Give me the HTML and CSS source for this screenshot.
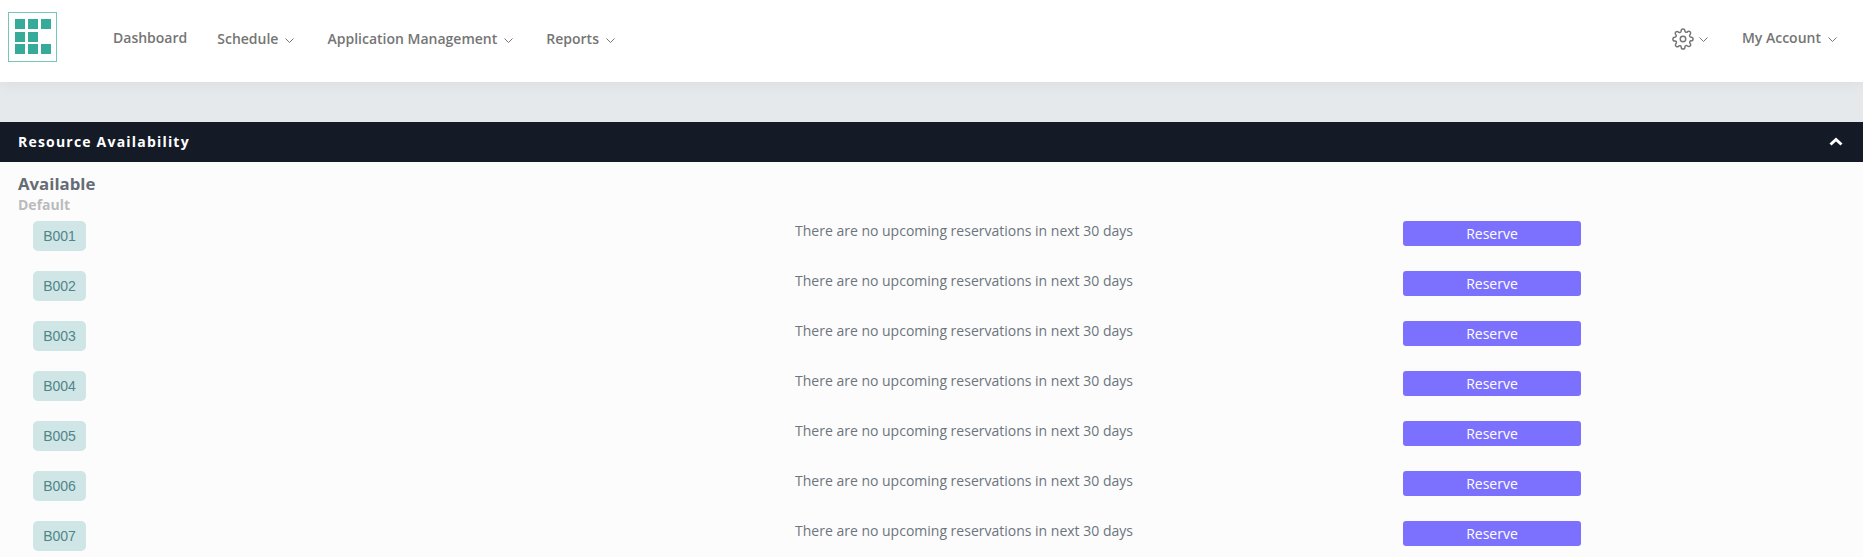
FILE: index.html
```html
<!DOCTYPE html>
<html lang="en">
<head>
    <meta charset="UTF-8">
    <meta name="viewport" content="width=device-width, initial-scale=1.0">
    <title>Resource Availability</title>
    <link rel="stylesheet" href="styles.css">
</head>
<body>

    <nav class="topbar">
        <div class="logo">
            <span></span><span></span><span></span>
            <span></span><span></span><span class="blank"></span>
            <span></span><span></span><span></span>
        </div>
        <ul class="menu">
            <li class="dashboard">Dashboard</li>
            <li>Schedule <svg class="caret" viewBox="0 0 9 5"><path d="M.5 .5l4 4 4-4"/></svg></li>
            <li>Application Management <svg class="caret" viewBox="0 0 9 5"><path d="M.5 .5l4 4 4-4"/></svg></li>
            <li>Reports <svg class="caret" viewBox="0 0 9 5"><path d="M.5 .5l4 4 4-4"/></svg></li>
        </ul>
        <div class="right-menu">
            <div class="settings">
                <svg class="gear" viewBox="0 0 24 24">
                    <circle cx="12" cy="12" r="3"/>
                    <path d="M19.4 15a1.65 1.65 0 0 0 .33 1.82l.06.06a2 2 0 1 1-2.83 2.83l-.06-.06a1.65 1.65 0 0 0-2.82 1.17V21a2 2 0 1 1-4 0v-.09a1.65 1.65 0 0 0-2.82-1.12l-.06.06a2 2 0 1 1-2.83-2.83l.06-.06a1.65 1.65 0 0 0-1.17-2.82H3a2 2 0 1 1 0-4h.09a1.65 1.65 0 0 0 1.12-2.82l-.06-.06a2 2 0 1 1 2.83-2.83l.06.06a1.65 1.65 0 0 0 1.82.33H9a1.65 1.65 0 0 0 1-1.51V3a2 2 0 1 1 4 0v.09a1.65 1.65 0 0 0 2.82 1.12l.06-.06a2 2 0 1 1 2.83 2.83l-.06.06a1.65 1.65 0 0 0-.33 1.82V9a1.65 1.65 0 0 0 1.51 1H21a2 2 0 1 1 0 4h-.09a1.65 1.65 0 0 0-1.51 1z"/>
                </svg>
                <svg class="caret" viewBox="0 0 9 5"><path d="M.5 .5l4 4 4-4"/></svg>
            </div>
            <div class="account">My Account <svg class="caret" viewBox="0 0 9 5"><path d="M.5 .5l4 4 4-4"/></svg></div>
        </div>
    </nav>

    <div class="strip"></div>

    <div class="panel-head">
        <span>Resource Availability</span>
        <svg class="collapse" viewBox="0 0 14 9"><path d="M1.5 7.5L7 2.5l5.5 5"/></svg>
    </div>

    <section class="panel-body">
        <h2>Available</h2>
        <h3>Default</h3>
        <div class="row"><span class="chip">B001</span><p>There are no upcoming reservations in next 30 days</p><button>Reserve</button></div>
        <div class="row"><span class="chip">B002</span><p>There are no upcoming reservations in next 30 days</p><button>Reserve</button></div>
        <div class="row"><span class="chip">B003</span><p>There are no upcoming reservations in next 30 days</p><button>Reserve</button></div>
        <div class="row"><span class="chip">B004</span><p>There are no upcoming reservations in next 30 days</p><button>Reserve</button></div>
        <div class="row"><span class="chip">B005</span><p>There are no upcoming reservations in next 30 days</p><button>Reserve</button></div>
        <div class="row"><span class="chip">B006</span><p>There are no upcoming reservations in next 30 days</p><button>Reserve</button></div>
        <div class="row"><span class="chip">B007</span><p>There are no upcoming reservations in next 30 days</p><button>Reserve</button></div>
    </section>

</body>
</html>
```

FILE: styles.css
```css
html, body {
    height: 557px;
    overflow: hidden;
}
body {
    margin: 0;
    font-family: "Open Sans", sans-serif;
    font-size: 14px;
    color: #6c757d;
    background-color: #fcfcfc;
}
.topbar {
    position: relative;
    height: 82px;
    display: flex;
    align-items: flex-start;
    padding: 0 26px 0 8px;
    background: #fff;
    box-shadow: 0 2px 14px rgba(0, 0, 0, 0.05);
}
.logo {
    width: 49px;
    height: 50px;
    margin-top: 12px;
    padding: 6px;
    box-sizing: border-box;
    border: 1px solid #74c7b8;
    display: grid;
    grid-template-columns: repeat(3, 10px);
    grid-template-rows: repeat(3, 10px);
    column-gap: 3px;
    row-gap: 2.5px;
}
.logo span {
    background: #36ab99;
}
.logo .blank {
    background: none;
}
.menu {
    list-style: none;
    display: flex;
    align-items: flex-start;
    margin: 28px 0 0 56px;
    padding: 0;
    color: #757575;
    font-weight: 600;
    font-size: 14px;
}
.menu li {
    margin-right: 33px;
    margin-top: 1px;
    white-space: nowrap;
}
.menu .dashboard {
    margin-right: 30px;
    margin-top: 0;
}
.caret {
    width: 9px;
    height: 5px;
    margin-left: 3.4px;
    vertical-align: 1px;
    fill: none;
    stroke: #757575;
    stroke-width: 1;
}
.right-menu {
    margin-left: auto;
    margin-top: 28px;
    display: flex;
    align-items: flex-start;
    color: #757575;
    font-weight: 600;
}
.settings {
    display: flex;
    align-items: center;
    margin-right: 34px;
}
.settings .caret {
    margin-left: 5px;
}
.gear {
    width: 22px;
    height: 22px;
    fill: none;
    stroke: #757575;
    stroke-width: 1.6;
}
.strip {
    height: 40px;
    background: #e6e9ec;
}
.panel-head {
    height: 38px;
    padding: 0 20px 2px 18px;
    display: flex;
    align-items: center;
    justify-content: space-between;
    background: #141b27;
    color: #fff;
    font-size: 14px;
    font-weight: 700;
    letter-spacing: 1.2px;
}
.collapse {
    width: 14px;
    height: 9px;
    fill: none;
    stroke: #fff;
    stroke-width: 3;
}
.panel-body {
    padding: 11px 0 0 18px;
}
.panel-body h2 {
    margin: 0;
    font-size: 16.8px;
    line-height: 22px;
    font-weight: 700;
    color: #666b75;
}
.panel-body h3 {
    margin: 1px 0 7px;
    font-size: 14px;
    line-height: 18px;
    font-weight: 700;
    color: #bbb;
}
.row {
    height: 50px;
    display: grid;
    grid-template-columns: 762px 608px 178px;
    align-items: start;
    padding-left: 15px;
}
.chip {
    width: 53px;
    height: 30px;
    line-height: 30px;
    text-align: center;
    border-radius: 5px;
    background: #cfe5e6;
    color: #4f8589;
    font-family: "Liberation Sans", sans-serif;
    font-size: 14px;
}
.row p {
    margin: 0;
    line-height: 20px;
}
.row button {
    height: 25px;
    padding: 0;
    border: none;
    border-radius: 3px;
    background: #7c71ff;
    color: #fff;
    font-family: inherit;
    font-size: 14px;
}
```
